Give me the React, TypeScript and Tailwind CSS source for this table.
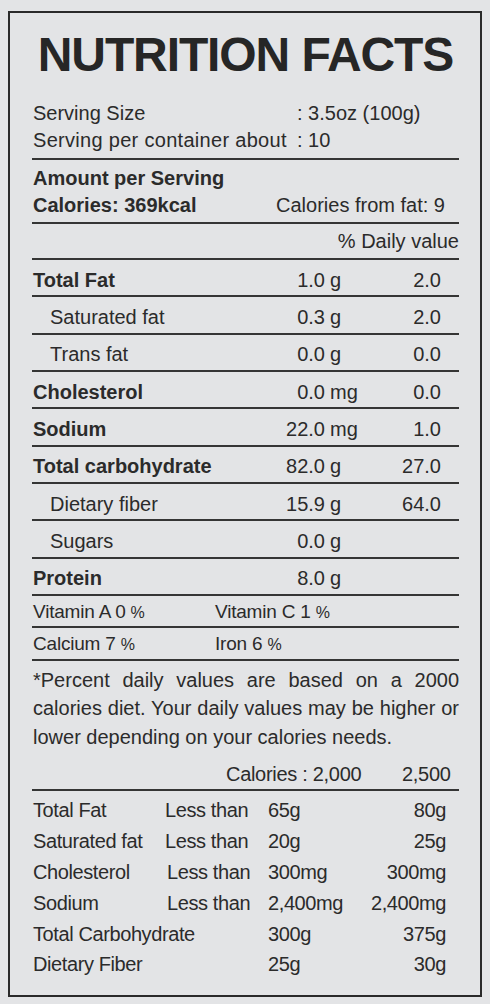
import React from "react";

type Nut = { label: string; bold?: boolean; indent?: boolean; num: string; unit: string; dv?: string };

const nutrients: Nut[] = [
  { label: "Total Fat", bold: true, num: "1.0", unit: "g", dv: "2.0" },
  { label: "Saturated fat", indent: true, num: "0.3", unit: "g", dv: "2.0" },
  { label: "Trans fat", indent: true, num: "0.0", unit: "g", dv: "0.0" },
  { label: "Cholesterol", bold: true, num: "0.0", unit: "mg", dv: "0.0" },
  { label: "Sodium", bold: true, num: "22.0", unit: "mg", dv: "1.0" },
  { label: "Total carbohydrate", bold: true, num: "82.0", unit: "g", dv: "27.0" },
  { label: "Dietary fiber", indent: true, num: "15.9", unit: "g", dv: "64.0" },
  { label: "Sugars", indent: true, num: "0.0", unit: "g" },
  { label: "Protein", bold: true, num: "8.0", unit: "g" },
];

const table: [string, string, string, string, boolean?][] = [
  ["Total Fat", "Less than", "65g", "80g"],
  ["Saturated fat", "Less than", "20g", "25g"],
  ["Cholesterol", "Less than", "300mg", "300mg", true],
  ["Sodium", "Less than", "2,400mg", "2,400mg", true],
  ["Total Carbohydrate", "", "300g", "375g"],
  ["Dietary Fiber", "", "25g", "30g"],
];

function Rule({ className = "" }: { className?: string }) {
  return <div className={`h-[2px] bg-[#353535] ${className}`} />;
}

export default function App() {
  return (
    <div className="min-h-[1004px] w-[490px] bg-[#e3e4e6] pt-[11px] pl-[8px] font-['Liberation_Sans',Arial,sans-serif] text-[#2b2b2b]">
      <div className="h-[986px] w-[474px] border-2 border-[#2a2a2a] pl-[22px] pr-[21px] pt-[18px]">
        <h1 className="text-center text-[48px] leading-[48px] font-bold tracking-[-1.1px] text-[#262626]">
          NUTRITION FACTS
        </h1>

        <div className="mt-[21px] text-[20px] leading-[27px]">
          <div className="flex">
            <span className="w-[265px] pl-[1px]">Serving Size</span>
            <span>: 3.5oz (100g)</span>
          </div>
          <div className="flex">
            <span className="w-[265px] pl-[1px] tracking-[0.3px]">Serving per container about</span>
            <span>: 10</span>
          </div>
        </div>
        <Rule className="mt-[4px]" />

        <div className="mt-[5px] text-[20px] leading-[27px]">
          <div className="pl-[1px] font-bold">Amount per Serving</div>
          <div className="flex justify-between">
            <span className="pl-[1px] font-bold">Calories: 369kcal</span>
            <span className="pr-[14px]">Calories from fat: 9</span>
          </div>
        </div>
        <Rule className="mt-[3px]" />

        <div className="h-[34px] text-right text-[20px] leading-[34px]">% Daily value</div>
        <Rule />

        {nutrients.map((n) => (
          <div
            key={n.label}
            className="flex h-[37.33px] items-center border-b-2 border-[#353535] pt-[4px] text-[20px] leading-[22px]"
          >
            <span className={`w-[230px] ${n.indent ? "pl-[18px]" : "pl-[1px]"} ${n.bold ? "font-bold" : ""}`}>
              {n.label}
            </span>
            <span className="w-[63px] text-right">{n.num}</span>
            <span className="w-[50px] pl-[5px]">{n.unit}</span>
            <span className="flex-1 pr-[18px] text-right">{n.dv ?? ""}</span>
          </div>
        ))}

        {[
          ["Vitamin A 0", "Vitamin C 1"],
          ["Calcium 7", "Iron 6"],
        ].map(([a, b]) => (
          <div
            key={a}
            className="flex h-[32.5px] items-center border-b-2 border-[#353535] pt-[2px] text-[19px] leading-[22px] tracking-[-0.2px]"
          >
            <span className="w-[183px] pl-[1px]">
              {a} <span className="text-[16px]">%</span>
            </span>
            <span>
              {b} <span className="text-[16px]">%</span>
            </span>
          </div>
        ))}

        <p className="mt-[5px] pl-[1px] text-justify text-[20px] leading-[28.5px]">
          *Percent daily values are based on a 2000 calories diet. Your daily values may be higher or lower
          depending on your calories needs.
        </p>

        <div className="mt-[11px] flex text-[20px] leading-[24px] tracking-[-0.3px]">
          <span className="w-[194px]" />
          <span className="w-[176px]">Calories : 2,000</span>
          <span>2,500</span>
        </div>
        <Rule className="mt-[3px]" />

        <div className="mt-[4px] text-[20px] leading-[30.8px] tracking-[-0.4px]">
          {table.map(([a, b, c, d, shift]) => (
            <div key={a} className="flex">
              <span className="w-[133px] shrink-0 whitespace-nowrap pl-[1px]">{a}</span>
              <span className={`w-[103px] shrink-0 whitespace-nowrap ${shift ? "pl-[2px]" : ""}`}>{b}</span>
              <span className="w-[90px] shrink-0 whitespace-nowrap">{c}</span>
              <span className="flex-1 whitespace-nowrap pr-[13px] text-right">{d}</span>
            </div>
          ))}
        </div>
      </div>
    </div>
  );
}
